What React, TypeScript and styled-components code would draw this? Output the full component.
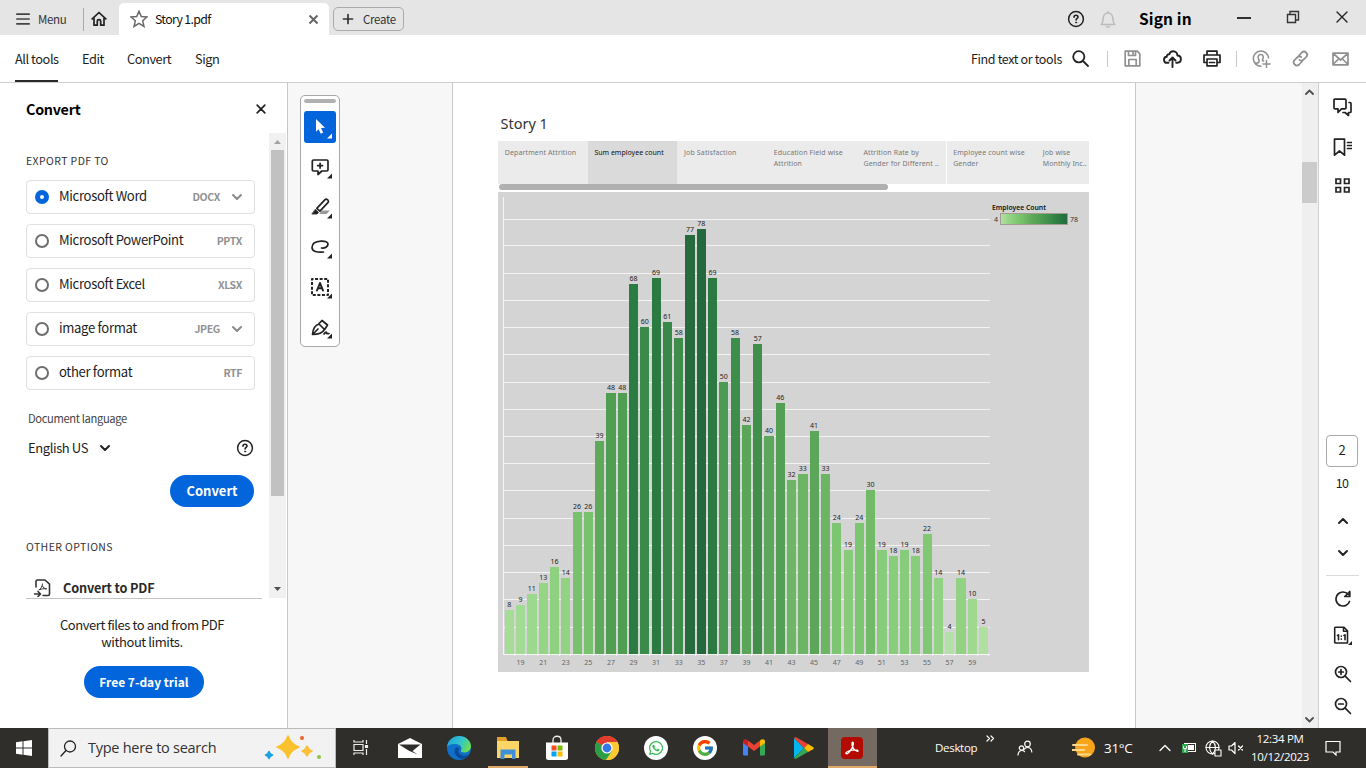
import React from "react";
import styled, { createGlobalStyle } from "styled-components";
import { FcGoogle } from "react-icons/fc";
import { FaWhatsapp } from "react-icons/fa";

const UI = `"Noto Sans CJK SC", "Noto Sans", sans-serif`;
const OS = `"Open Sans", "Noto Sans", sans-serif`;

const Global = createGlobalStyle`
  * { box-sizing: border-box; }
  html, body { margin: 0; padding: 0; overflow: hidden; }
  body { width: 1366px; height: 768px; background: #fff; font-family: ${UI}; color: #1d1d1d; }
  svg { display: block; flex: none; }
`;

const Window = styled.div`
  width: 1366px;
  height: 768px;
  display: flex;
  flex-direction: column;
  overflow: hidden;
`;

const Label = styled.span<{ $size?: number; $ls?: number; $w?: number; $bold?: boolean; $color?: string; $ml?: number }>`
  flex: none;
  white-space: nowrap;
  line-height: 18px;
  font-size: ${(p) => p.$size ?? 13}px;
  letter-spacing: ${(p) => p.$ls ?? 0}px;
  font-weight: ${(p) => (p.$bold ? 700 : 400)};
  color: ${(p) => p.$color ?? "#1d1d1d"};
  margin-left: ${(p) => p.$ml ?? 0}px;
  ${(p) => (p.$w ? `width: ${p.$w}px;` : "")}
`;

const IconBox = styled.span<{ $w?: number; $h?: number; $ml?: number; $mt?: number }>`
  flex: none;
  display: flex;
  align-items: center;
  justify-content: center;
  width: ${(p) => p.$w ?? 18}px;
  height: ${(p) => p.$h ?? 18}px;
  margin-left: ${(p) => p.$ml ?? 0}px;
  margin-top: ${(p) => p.$mt ?? 0}px;
`;

const Divider = styled.span<{ $h: number; $ml: number; $color?: string }>`
  flex: none;
  width: 1px;
  height: ${(p) => p.$h}px;
  margin-left: ${(p) => p.$ml}px;
  background: ${(p) => p.$color ?? "#c9c9c9"};
`;

type IconProps = { size?: number; w?: number; h?: number; color?: string; sw?: number; children?: React.ReactNode };
const Icon = ({ size = 18, w, h, color = "#222", sw = 1.7, children }: IconProps) => (
  <svg
    width={w ?? size}
    height={h ?? size}
    viewBox={`0 0 ${w ?? size} ${h ?? size}`}
    fill="none"
    stroke={color}
    strokeWidth={sw}
    strokeLinejoin="round"
    strokeLinecap="round"
  >
    {children}
  </svg>
);

const HelpIcon = () => (
  <Icon color="#222" sw={1.5}>
    <circle cx="9" cy="9" r="7.4" />
    <path d="M7 7.2C7 5.9 7.9 5.2 9 5.2s2 .7 2 1.8c0 1.3-1.9 1.5-1.9 3" strokeWidth="1.6" />
    <circle cx="9.1" cy="12.5" r=".6" fill="#222" strokeWidth=".8" />
  </Icon>
);
const ChevronIcon = ({ color = "#8a8a8a", up = false }: { color?: string; up?: boolean }) => (
  <Icon w={12} h={8} color={color} sw={2}>
    <path d={up ? "M2 6l4-4 4 4" : "M2 2l4 4 4-4"} />
  </Icon>
);

/* ---------- title bar ---------- */
const TitleBar = styled.header`
  height: 35px;
  flex: none;
  display: flex;
  background: #e5e5e5;
`;
const TitleLeft = styled.div`
  display: flex;
  align-items: center;
  width: 119px;
  height: 35px;
  padding: 3px 0 0 16px;
`;
const Tab = styled.div`
  width: 210px;
  height: 32px;
  margin-top: 3px;
  padding-left: 11px;
  display: flex;
  align-items: center;
  background: #fff;
  border-radius: 5px 5px 0 0;
`;
const CreateButton = styled.div`
  width: 71px;
  height: 24px;
  margin: 7px 0 0 4px;
  padding-left: 8px;
  display: flex;
  align-items: center;
  border: 1px solid #aaa;
  border-radius: 5px;
`;
const TitleRight = styled.div`
  margin-left: auto;
  width: 299px;
  display: flex;
  align-items: center;
`;

const TopBar = () => (
  <TitleBar>
    <TitleLeft>
      <Icon w={14} h={12} color="#444" sw={1.7}>
        <path d="M.8 1.2h12.4M.8 6h12.4M.8 10.8h12.4" />
      </Icon>
      <Label $size={11.5} $ls={-0.3} $ml={8} $w={45} $color="#333">Menu</Label>
      <Divider $h={23} $ml={0} $color="#aaa" />
      <IconBox $w={16} $ml={7}>
        <Icon w={16} h={16} sw={1.7}>
          <path d="M1.2 7.9L8 1.5l6.8 6.4M3 7v7.2h3.3v-4c0-1 .7-1.6 1.7-1.6s1.7.6 1.7 1.6v4H13V7" />
        </Icon>
      </IconBox>
    </TitleLeft>
    <Tab>
      <Icon w={18} h={18} color="#6a6a6a" sw={1.5}>
        <path d="M9 1.2l2.3 5.3 5.7.5-4.3 3.8 1.3 5.7L9 13.4l-5 3.1 1.3-5.7L1 7l5.7-.5z" strokeLinejoin="miter" />
      </Icon>
      <Label $size={12.3} $ls={-0.65} $ml={7} $w={153} $color="#111">Story 1.pdf</Label>
      <Icon w={11} h={11} color="#666" sw={2}>
        <path d="M1.5 1.5l8 8M9.5 1.5l-8 8" strokeLinecap="butt" />
      </Icon>
    </Tab>
    <CreateButton>
      <Icon w={12} h={12} color="#333" sw={1.7}>
        <path d="M6 1.5v9M1.5 6h9" />
      </Icon>
      <Label $size={11.5} $ls={-0.3} $ml={9} $color="#333">Create</Label>
    </CreateButton>
    <TitleRight>
      <IconBox $mt={3}><HelpIcon /></IconBox>
      <IconBox $ml={15} $mt={4} $w={16}>
        <Icon w={16} h={18} color="#bbb" sw={1.5}>
          <path d="M1.2 13.5c1.7-1.5 2-3 2-6C3.2 4.5 5 2 8 2s4.800 2.500 4.800 5.500c0 3 .3 4.500 2 6zM8 .8V2M6.500 15.500c.5.900 2.500.900 3 0" />
        </Icon>
      </IconBox>
      <Label $size={15.5} $bold $ls={0.15} $ml={23} $w={98} $color="#000">Sign in</Label>
      <Icon w={14} h={4} sw={1.7} color="#111"><path d="M0 2h14" strokeLinecap="butt" /></Icon>
      <IconBox $ml={35} $w={14} $mt={-1}>
        <Icon w={14} h={14} sw={1.4} color="#333">
          <path d="M1.500 4.500h8v8h-8zM4 4V1.500h8.500V10H10" strokeLinejoin="miter" />
        </Icon>
      </IconBox>
      <IconBox $ml={36} $w={12} $mt={-2}>
        <Icon w={12} h={12} sw={1.4} color="#222"><path d="M1 1l10 10M11 1L1 11" /></Icon>
      </IconBox>
    </TitleRight>
  </TitleBar>
);

/* ---------- menu bar ---------- */
const MenuBar = styled.nav`
  height: 48px;
  flex: none;
  display: flex;
  align-items: center;
  padding-left: 15px;
  border-bottom: 1px solid #cfcfcf;
`;
const MenuItem = styled.span<{ $w: number; $active?: boolean }>`
  width: ${(p) => p.$w}px;
  height: 47px;
  margin-right: 24px;
  font-size: 12.8px;
  letter-spacing: -0.45px;
  line-height: 47px;
  white-space: nowrap;
  border-bottom: 2px solid ${(p) => (p.$active ? "#2a2a2a" : "transparent")};
`;
const MenuTools = styled.div`
  margin-left: auto;
  width: 395px;
  display: flex;
  align-items: center;
`;

const CommandBar = () => (
  <MenuBar>
    <MenuItem $w={43} $active>All tools</MenuItem>
    <MenuItem $w={21}>Edit</MenuItem>
    <MenuItem $w={44}>Convert</MenuItem>
    <MenuItem $w={25}>Sign</MenuItem>
    <MenuTools>
      <Label $size={12.5} $ls={-0.37} $w={101}>Find text or tools</Label>
      <Icon w={17} h={17} sw={1.8}><circle cx="6.800" cy="6.800" r="5.600" /><path d="M11 11l5 5" /></Icon>
      <Divider $h={16} $ml={18} />
      <IconBox $ml={16} $w={17}>
        <Icon w={17} h={17} color="#909090" sw={1.7}>
          <path d="M1.200 1.200h12l2.600 2.600v12H1.200zM4.500 1.500v4h7v-4M4.800 15.500V9.500h7.400v6M9 2v2" />
        </Icon>
      </IconBox>
      <IconBox $ml={22} $w={19}>
        <Icon w={19} h={18} sw={1.9}>
          <path d="M5.500 12.800H4.300a3 3 0 01-.5-6c0-1.500 1-2.600 2.500-2.500C6.800 2.400 8.300 1.200 10.200 1.200c2.400 0 4.200 1.900 4.200 4.300 2 0 3.500 1.500 3.500 3.600s-1.500 3.700-3.500 3.700h-1.200M9.500 17V8M6.500 10.500l3-3 3 3" />
        </Icon>
      </IconBox>
      <IconBox $ml={21} $w={18}>
        <Icon w={18} h={17} sw={1.7}>
          <path d="M4 4.500V1.200h10v3.300M4 12.500H1V5h16v7.500h-3M4 9h10v6.800H4zM6.500 12.500h5" />
        </Icon>
      </IconBox>
      <Divider $h={16} $ml={15} />
      <IconBox $ml={15} $w={18}>
        <Icon w={19} h={18} color="#909090" sw={1.5}>
          <path d="M9 16.200A7.600 7.600 0 1116.500 8M3.800 13c2.800.3 3.800-1 3.200-3C5.500 7.500 6 4.500 8.800 4.500s3 3 1.700 5c-.3 1.200.3 1.500 1.200 1.500M14.500 10.500v7M11 14h7" />
        </Icon>
      </IconBox>
      <IconBox $ml={22} $w={17}>
        <Icon w={17} h={17} color="#909090" sw={1.8}>
          <path d="M7 5.500l2.800-3c1.300-1.200 3-1.200 4.300 0s1.400 3 .2 4.300L11.500 9.700c-1.200 1.200-3 1.100-4 .2M10 11.500l-2.800 3c-1.300 1.200-3.300 1.200-4.500 0s-1.400-3-.2-4.300L5.300 7.300c1.200-1.200 3-1.100 4-.2" />
        </Icon>
      </IconBox>
      <IconBox $ml={23} $w={17}>
        <Icon w={17} h={14} color="#909090" sw={1.7}>
          <path d="M1 1.200h15v11.600H1zM1.500 1.700L8.500 8l7-6.300M1.500 12l5-5M15.500 12l-5-5" />
        </Icon>
      </IconBox>
    </MenuTools>
  </MenuBar>
);

/* ---------- left panel ---------- */
const Workspace = styled.main`
  height: 645px;
  flex: none;
  display: flex;
`;
const Panel = styled.aside`
  width: 288px;
  flex: none;
  border-right: 1px solid #c8c8c8;
  display: flex;
  flex-direction: column;
`;
const PanelHeader = styled.div`
  height: 50px;
  flex: none;
  display: flex;
  align-items: center;
  justify-content: space-between;
  padding: 2px 21px 0 26px;
`;
const PanelBody = styled.div`
  height: 465px;
  flex: none;
  display: flex;
`;
const PanelContent = styled.div`
  width: 269px;
  height: 465px;
  padding: 19px 0 0 26px;
  overflow: hidden;
`;
const SectionTitle = styled.div`
  height: 18px;
  line-height: 18px;
  font-size: 10.5px;
  letter-spacing: 0.4px;
  white-space: nowrap;
  color: #333;
`;
const FormatCard = styled.div`
  width: 229px;
  height: 34px;
  margin-bottom: 10px;
  padding: 0 12px 0 8px;
  display: flex;
  align-items: center;
  border: 1px solid #e0e0e0;
  border-radius: 4px;
`;
const FormatList = styled.div`
  padding-top: 10px;
`;
const Radio = styled.span<{ $on?: boolean }>`
  width: 14px;
  height: 14px;
  flex: none;
  border-radius: 50%;
  background: #fff;
  border: ${(p) => (p.$on ? "5px solid #0265dc" : "2px solid #6e6e6e")};
`;
const FormatName = styled.span`
  flex: 1;
  margin-left: 10px;
  font-size: 13.1px;
  letter-spacing: -0.33px;
  line-height: 18px;
  padding-bottom: 2px;
  white-space: nowrap;
`;
const FormatExt = styled.span`
  font-size: 10.5px;
  font-weight: 700;
  letter-spacing: -0.35px;
  color: #929292;
  line-height: 34px;
`;
const LanguageRow = styled.div`
  display: flex;
  align-items: center;
  height: 20px;
  margin-top: 11px;
  padding-left: 2px;
`;
const Pill = styled.div<{ $w: number; $size?: number }>`
  width: ${(p) => p.$w}px;
  height: 32px;
  border-radius: 16px;
  background: #0265dc;
  color: #fff;
  font-weight: 700;
  font-size: ${(p) => p.$size ?? 13}px;
  line-height: 31px;
  text-align: center;
  white-space: nowrap;
`;
const ConvertRow = styled.div`
  width: 228px;
  margin-top: 17px;
  display: flex;
  justify-content: flex-end;
`;
const OtherTitle = styled(SectionTitle)`
  margin-top: 31px;
`;
const OptionRow = styled.div`
  display: flex;
  align-items: center;
  height: 22px;
  margin-top: 21px;
  padding-left: 8px;
`;
const PanelScroll = styled.div`
  width: 17px;
  height: 465px;
  background: #f1f1f1;
  display: flex;
  flex-direction: column;
  align-items: center;
  justify-content: space-between;
  padding: 7px 0;
`;
const PanelThumb = styled.div`
  width: 13px;
  height: 346px;
  margin: 6px 0 91px;
  background: #c1c1c1;
`;
const PanelFooter = styled.div`
  width: 236px;
  margin-left: 26px;
  padding-top: 17px;
  border-top: 1px solid #c4c4c4;
  display: flex;
  flex-direction: column;
  align-items: center;
  height: 130px;
  flex: none;
`;
const Pitch = styled.p`
  margin: 0 0 16px -4px;
  font-size: 13px;
  letter-spacing: -0.43px;
  line-height: 17px;
  text-align: center;
`;

const formats = [
  { name: "Microsoft Word", ext: "DOCX", on: true, menu: true },
  { name: "Microsoft PowerPoint", ext: "PPTX" },
  { name: "Microsoft Excel", ext: "XLSX" },
  { name: "image format", ext: "JPEG", menu: true },
  { name: "other format", ext: "RTF" },
];

const ConvertPanel = () => (
  <Panel>
    <PanelHeader>
      <Label $size={14.3} $bold $ls={-0.25} $color="#000">Convert</Label>
      <Icon w={10} h={10} sw={1.7}><path d="M1.200 1.200l7.600 7.600M8.800 1.200L1.200 8.800" /></Icon>
    </PanelHeader>
    <PanelBody>
      <PanelContent>
        <SectionTitle>EXPORT PDF TO</SectionTitle>
        <FormatList>
          {formats.map((f) => (
            <FormatCard key={f.name}>
              <Radio $on={f.on} />
              <FormatName>{f.name}</FormatName>
              <FormatExt>{f.ext}</FormatExt>
              {f.menu && <IconBox $w={11} $ml={11}><ChevronIcon /></IconBox>}
            </FormatCard>
          ))}
        </FormatList>
        <IconBox $w={100} $h={18} $ml={2} $mt={19}>
          <Label $size={11.2} $ls={-0.37} $w={100} $color="#444">Document language</Label>
        </IconBox>
        <LanguageRow>
          <Label $size={13} $ls={-0.4} $w={71}>English US</Label>
          <ChevronIcon color="#222" />
          <IconBox $ml={125}><HelpIcon /></IconBox>
        </LanguageRow>
        <ConvertRow><Pill $w={84}>Convert</Pill></ConvertRow>
        <OtherTitle>OTHER OPTIONS</OtherTitle>
        <OptionRow>
          <Icon w={17} h={18} sw={1.6} color="#333">
            <path d="M2 8V2.500C2 1.500 2.500 1 3.500 1H11l4.500 4.200V15c0 1-.5 1.500-1.500 1.500H9M0 15h6M4 12.500L6.500 15 4 17.500" />
            <path d="M5 11c2-1 3.500-4 3.500-6M8.500 7c.8 1.800 2 2.800 4 2.800M6 10.500c2-.7 3.500-1 6-.7" strokeWidth="1" />
          </Icon>
          <Label $size={12.7} $ls={-0.15} $bold $ml={12} $color="#2a2a2a">Convert to PDF</Label>
        </OptionRow>
      </PanelContent>
      <PanelScroll>
        <svg width="7" height="4"><path d="M0 4L3.500 0 7 4z" fill="#a3a3a3" /></svg>
        <PanelThumb />
        <svg width="7" height="4"><path d="M0 0h7L3.500 4z" fill="#505050" /></svg>
      </PanelScroll>
    </PanelBody>
    <PanelFooter>
      <Pitch>Convert files to and from PDF<br />without limits.</Pitch>
      <Pill $w={120} $size={12}>Free 7-day trial</Pill>
    </PanelFooter>
  </Panel>
);

/* ---------- document canvas ---------- */
const Canvas = styled.section`
  width: 1014px;
  flex: none;
  display: flex;
  align-items: flex-start;
  background: #f7f7f7;
`;
const Palette = styled.div`
  width: 40px;
  height: 252px;
  margin: 12px 0 0 12px;
  flex: none;
  display: flex;
  flex-direction: column;
  align-items: center;
  background: #fff;
  border: 1px solid #a8a8a8;
  border-radius: 5px;
`;
const Grip = styled.div`
  width: 32px;
  height: 4px;
  flex: none;
  margin: 3px 0 8px;
  border-radius: 2px;
  background: #b1b1b1;
`;
const ToolButton = styled.div<{ $active?: boolean }>`
  width: 32px;
  height: 32px;
  flex: none;
  margin-bottom: 8px;
  border-radius: 3px;
  background: ${(p) => (p.$active ? "#0265dc" : "transparent")};
`;

const tools: React.ReactNode[] = [
  <path d="M12 8l9 8.700-4 .4 2.200 4.400-2.400 1.200-2.200-4.500-2.600 2.600z" fill="#fff" stroke="none" />,
  <path d="M9.500 9h13.300c.8 0 1.200.5 1.200 1.200v8.600c0 .8-.5 1.200-1.200 1.200h-5L14 23.500V20h-4.500c-.8 0-1.200-.5-1.200-1.200v-8.600C8.300 9.500 8.700 9 9.500 9zM13.700 14.700h4.800M16.100 12.300v4.800" />,
  <>
    <path d="M15 23l3-3.500h8L22.500 23z" fill="#999" stroke="none" />
    <path d="M12.800 17.300l8-8.500c.8-.8 2-.7 2.900.1s1 2 .2 2.800l-8 8.500z" />
    <path d="M11.500 18.500l3 3-1.500 1.500H8.200z" fill="#222" stroke="#222" strokeWidth=".8" />
  </>,
  <path d="M17.500 17c3 .5 6-1 6.500-3.500.3-2.500-3-3.500-7-3.300C12 10.500 8 12.500 8 16.500c0 4 5 5 11.500 4.500" />,
  <>
    <rect x="8" y="8" width="16" height="16" strokeDasharray="3 1.570" strokeDashoffset="1.500" strokeWidth="2" strokeLinecap="butt" />
    <path d="M13 19.500L16 12l3 7.500M14 17.300h4" strokeWidth="2" />
  </>,
  <path d="M8.500 23.500c.3-4.500 1.500-9 6.500-10.500l5.500 5.500c-2 3.500-6 5-12 5zM9 23l5-5M15 12.500l3-3 5.500 4.500-2.500 4M20 23c1.500-2.500 3-2.500 2.500-.5 1 0 1.500.3 2.500 0" />,
];

const Page = styled.article`
  width: 684px;
  height: 645px;
  margin-left: 112px;
  flex: none;
  padding: 31px 46px 0 45px;
  background: #fff;
  border: solid #c9c9c9;
  border-width: 0 1px;
  font-family: "Noto Sans", sans-serif;
`;
const StoryTitle = styled.h1`
  height: 18px;
  margin: 0 0 9px 2.5px;
  font-size: 14.5px;
  line-height: 18px;
  font-weight: 400;
  color: #333;
`;
const StoryTabs = styled.div`
  display: flex;
  height: 43px;
  background: #ebebeb;
`;
const StoryTab = styled.div<{ $active?: boolean; $gap?: boolean }>`
  flex: 0 0 89.7px;
  max-width: 89.7px;
  height: 43px;
  overflow: hidden;
  padding: 7px 0 0 ${(p) => (p.$gap ? 5.7 : 6.7)}px;
  font-size: 7px;
  line-height: 10.5px;
  letter-spacing: ${(p) => (p.$active ? 0 : 0.13)}px;
  white-space: pre;
  color: ${(p) => (p.$active ? "#111" : "#777")};
  background: ${(p) => (p.$active ? "#dadada" : "transparent")};
  border-left: ${(p) => (p.$gap ? "1px solid #fff" : "0")};
  &:last-child { flex: 1 1 0; letter-spacing: 0.08px; }
`;
const StoryScroll = styled.div`
  width: 389px;
  height: 6px;
  margin: 0 0 2px 1px;
  border-radius: 3px;
  background: #b0b0b0;
`;

const counts = [
  8, 9, 11, 13, 16, 14, 26, 26, 39, 48, 48, 68, 60, 69, 61, 58, 77, 78, 69, 50, 58, 42, 57, 40, 46, 32, 33, 41, 33,
  24, 19, 24, 30, 19, 18, 19, 18, 22, 14, 4, 14, 10, 5,
];
const ramp: [number, number[]][] = [
  [4, [179, 224, 166]],
  [8, [165, 220, 150]],
  [14, [146, 211, 131]],
  [26, [120, 194, 109]],
  [40, [93, 167, 90]],
  [48, [79, 158, 82]],
  [58, [62, 142, 75]],
  [68, [43, 124, 66]],
  [78, [36, 105, 61]],
];
const rgb = (c: number[]) => `rgb(${c.map(Math.round).join(",")})`;
const shade = (v: number) => {
  const i = Math.max(1, ramp.findIndex(([s]) => s >= v));
  const [a, ca] = ramp[i - 1];
  const [b, cb] = ramp[i];
  const t = (v - a) / (b - a);
  return rgb(ca.map((c, k) => c + (cb[k] - c) * t));
};

const STEP = 11.29;
const UNIT = 5.4435;
const GRID = 27.235;
const BASE = 462;

const Chart = () => (
  <svg width="591" height="480" fontFamily="Noto Sans, sans-serif" fontSize="7">
    <defs>
      <linearGradient id="scale">
        {ramp.map(([s, c]) => <stop key={s} offset={(s - 4) / 74} stopColor={rgb(c)} />)}
      </linearGradient>
    </defs>
    <rect width="591" height="480" fill="#d4d4d4" />
    {Array.from({ length: 16 }, (_, i) => (
      <rect key={i} x="6" y={Math.max(27, Math.round(BASE - 0.1 - (i + 1) * GRID))} width="486" height="1" fill="#f3f3f3" />
    ))}
    <rect x="5" y="5" width="1" height="458" fill="#f5f5f5" />
    <rect x="5" y={BASE} width="487" height="1" fill="#f5f5f5" />
    {counts.map((v, i) => {
      const cx = 11.3 + i * STEP;
      const left = Math.floor(7.3 + i * STEP);
      const right = Math.floor(16.48 + i * STEP);
      const top = Math.round(BASE - 0.21 - v * UNIT);
      return (
        <g key={i}>
          <rect x={left} y={top} width={right - left} height={BASE - top} fill={shade(v)} />
          <rect x={right} y={BASE} width="1" height="2" fill="#f5f5f5" />
          <text x={cx} y={top - 3} textAnchor="middle" fill="#222">{v}</text>
          {i % 2 === 1 && <text x={cx} y="473" textAnchor="middle" fill="#666">{18 + i}</text>}
        </g>
      );
    })}
    <text x="494" y="18" fill="#111" fontWeight="600" fontSize="6.8">Employee Count</text>
    <text x="496" y="30" fill="#333">4</text>
    <text x="572" y="30" fill="#333">78</text>
    <rect x="502.500" y="21.500" width="67" height="11" fill="url(#scale)" stroke="#a39a92" />
  </svg>
);

const Document = () => (
  <Page>
    <StoryTitle>Story 1</StoryTitle>
    <StoryTabs>
      <StoryTab>Department Attrition</StoryTab>
      <StoryTab $active>Sum employee count</StoryTab>
      <StoryTab>Job Satisfaction</StoryTab>
      <StoryTab>{"Education Field wise\nAttrition"}</StoryTab>
      <StoryTab>{"Attrition Rate by\nGender for Different .."}</StoryTab>
      <StoryTab $gap>{"Employee count wise\nGender"}</StoryTab>
      <StoryTab>{"Job wise\nMonthly Inc.."}</StoryTab>
    </StoryTabs>
    <StoryScroll />
    <Chart />
  </Page>
);

const DocScroll = styled.div`
  width: 17px;
  height: 645px;
  flex: none;
  display: flex;
  flex-direction: column;
  align-items: center;
  justify-content: space-between;
  padding: 6px 1px 5px 0;
  background: #efefef;
  border-right: 1px solid #cfcfcf;
`;
const DocThumb = styled.div`
  width: 15px;
  height: 41px;
  margin-bottom: 447px;
  background: #cbcbcb;
`;

/* ---------- right rail ---------- */
const Rail = styled.aside`
  width: 47px;
  flex: none;
  display: flex;
  flex-direction: column;
  align-items: center;
  padding-top: 15px;
`;
const PageBox = styled.div`
  width: 32px;
  height: 32px;
  margin: 240px 1px 0 0;
  flex: none;
  border: 1px solid #a8a8a8;
  border-radius: 4px;
  font-size: 13px;
  line-height: 28px;
  text-align: center;
`;
const PageTotal = styled.div`
  height: 18px;
  margin: 7px 1px 20px 0;
  font-size: 12.5px;
  line-height: 18px;
  letter-spacing: -0.8px;
`;
const RailRule = styled.div`
  width: 33px;
  height: 1px;
  margin: 13px 0 14px;
  background: #dcdcdc;
`;
const CornerMark = <path d="M19 15v4h-4z" fill="#222" stroke="none" />;

const RightRail = () => (
  <Rail>
    <Icon w={19} h={19}>
      <path d="M2 1.200h10c.6 0 1 .4 1 1v7.600c0 .6-.4 1-1 1H8.500L5 14.500v-3.700H2c-.6 0-1-.4-1-1V2.200c0-.6.400-1 1-1z" />
      <path d="M16 4.500h1c.6 0 1 .4 1 1v8c0 .6-.4 1-1 1h-1.500v3l-3.500-3h-2" />
    </Icon>
    <IconBox $mt={21} $w={19} $h={19}>
      <Icon w={19} h={19}>
        <path d="M1.500 1.200h10v16L6.500 13l-5 4.200zM14.500 4.500h4M14.500 7.500h4M14.500 10.500h4" />
      </Icon>
    </IconBox>
    <IconBox $mt={19} $w={15} $h={19}>
      <Icon w={15} h={15} sw={1.7}>
        <path d="M1 1h4.500v4.500H1zM9.500 1H14v4.500H9.500zM1 9.500h4.500V14H1zM9.500 9.500H14V14H9.500z" strokeLinejoin="miter" />
      </Icon>
    </IconBox>
    <PageBox>2</PageBox>
    <PageTotal>10</PageTotal>
    <IconBox $h={18}><ChevronIcon color="#222" up /></IconBox>
    <IconBox $h={18} $mt={14}><ChevronIcon color="#222" /></IconBox>
    <RailRule />
    <Icon w={18} h={18}>
      <path d="M15.500 11.500A7 7 0 119 2c2.300 0 4 .9 5.500 2.500M15.800 1.500v5h-5z" />
    </Icon>
    <IconBox $mt={18} $w={19} $h={20}>
      <Icon w={19} h={20} sw={1.6}>
        <path d="M2.500 1.200H11l3.500 3.500V17h-12c-.5 0-.8-.3-.8-.8V2c0-.5.300-.8.800-.8zM10.500 1.500v3.700h3.700M4.500 9.500l1-.7v5M11 9.500l1-.7v5" />
        <path d="M8.300 10v.2M8.300 13v.2" />
        {CornerMark}
      </Icon>
    </IconBox>
    <IconBox $mt={19}>
      <Icon><circle cx="7" cy="7" r="5.500" /><path d="M11.200 11.200L16.500 16.500M4.700 7h4.600M7 4.700v4.600" /></Icon>
    </IconBox>
    <IconBox $mt={14}>
      <Icon><circle cx="7" cy="7" r="5.500" /><path d="M11.200 11.200L16.500 16.500M4.700 7h4.600" /></Icon>
    </IconBox>
  </Rail>
);

/* ---------- taskbar ---------- */
const Taskbar = styled.footer`
  height: 40px;
  flex: none;
  display: flex;
  align-items: center;
  background: #302e2b;
  font-family: ${OS};
`;
const StartButton = styled.div`
  width: 48px;
  display: flex;
  justify-content: center;
`;
const SearchBox = styled.div`
  width: 288px;
  height: 40px;
  padding-left: 11px;
  display: flex;
  align-items: center;
  background: #f2f2f2;
  border: 1px solid #bbb;
`;
const AppSlot = styled.div<{ $active?: boolean; $running?: boolean }>`
  width: 49.2px;
  height: 40px;
  padding-bottom: 1px;
  display: flex;
  align-items: center;
  justify-content: center;
  background-color: ${(p) => (p.$active ? "#746a62" : "transparent")};
  background-image: ${(p) => (p.$active || p.$running ? "linear-gradient(#e0a868, #e0a868)" : "none")};
  background-size: ${(p) => (p.$active ? "100%" : "40px")} 2px;
  background-repeat: no-repeat;
  background-position: center bottom;
`;
const Tray = styled.div`
  margin-left: auto;
  width: 431px;
  display: flex;
  align-items: center;
`;
const Clock = styled.div`
  width: 66px;
  margin: -1px 0 0 3px;
  font-size: 11.5px;
  line-height: 18px;
  letter-spacing: -0.3px;
  text-align: center;
  color: #fff;
`;

const Sparkle = ({ x, y, r, c }: { x: number; y: number; r: number; c: string }) => (
  <path
    d={`M${x} ${y - r}Q${x + r * 0.25} ${y - r * 0.25} ${x + r} ${y}Q${x + r * 0.25} ${y + r * 0.25} ${x} ${y + r}Q${x - r * 0.25} ${y + r * 0.25} ${x - r} ${y}Q${x - r * 0.25} ${y - r * 0.25} ${x} ${y - r}z`}
    fill={c}
    stroke={c}
    strokeWidth="1.500"
    strokeLinejoin="round"
  />
);

const apps: { icon: React.ReactNode; running?: boolean; active?: boolean }[] = [
  { icon: <svg width="18" height="17" fill="none" stroke="#eee" strokeWidth="1.200"><path d="M2 1v2h9V1M2 16v-2h9v2M2 5.500h9v6H2zM14.500 1v4M14.500 10v6" /><path d="M13.500 6.500h2v2h-2z" fill="#eee" /></svg> },
  { icon: <svg width="24" height="20"><path d="M0 6L12 0l12 6v14H0z" fill="#fff" /><path d="M1 6.500h21.500l-8 6.500 5 3.500-9-4z" fill="#302e2b" /></svg> },
  {
    icon: (
      <svg width="24" height="24" viewBox="0 0 24 24">
        <defs>
          <linearGradient id="edgeTop" x1="0" y1="0.200" x2="1" y2="0.600"><stop offset="0" stopColor="#1fa3dc" /><stop offset="0.550" stopColor="#33c4cc" /><stop offset="1" stopColor="#6ee04a" /></linearGradient>
        </defs>
        <circle cx="12" cy="12" r="12" fill="#0f6fc9" />
        <path d="M0 11C1 4 6 0 12 0c7 0 12 5 12 10 0 4-3 6.500-6.500 6.500-3 0-4-1-3.500-2 1-1 1-5-3-6C7 7.500 2 8 0 11z" fill="url(#edgeTop)" />
        <path d="M8.500 12c-2.500 4 .5 10.500 7 10.800 3-.3 5.500-2.300 6.500-4.300-3 2-7.500 1.500-9.500-.8-1.700-2-1.500-3.500-.2-5.200-1-1.500-2.800-1.700-3.800-.5z" fill="#0b4a97" />
      </svg>
    ),
  },
  {
    icon: (
      <svg width="22" height="24" viewBox="0 -2 22 24"><path d="M0 1h9l2 2.500h11V20H0z" fill="#f7c652" /><path d="M0-1h9l1.500 4H0z" fill="#e0a02a" /><path d="M0 3h22v17H0z" fill="#fbd667" /><path d="M3.500 11.500h15V21H15v-4.500H7.500V21h-4z" fill="#3f90d8" /></svg>
    ),
    running: true,
  },
  {
    icon: (
      <svg width="22" height="26" viewBox="0 -1 22 26"><path d="M7 8V4c0-5 8-5 8 0v4" fill="none" stroke="#eee" strokeWidth="1.300" /><path d="M0 6.500h22V22c0 1.300-1 2-2.500 2h-17C1 24 0 23.300 0 22z" fill="#fff" /><path d="M5.500 9.500h5v5h-5z" fill="#f25022" /><path d="M11.500 9.500h5v5h-5z" fill="#7fba00" /><path d="M5.500 15.500h5v5h-5z" fill="#00a4ef" /><path d="M11.500 15.500h5v5h-5z" fill="#ffb900" /></svg>
    ),
  },
  {
    icon: (
      <svg width="24" height="24" viewBox="0 0 24 24"><circle cx="12" cy="12" r="12" fill="#fcc934" /><path d="M12 12L1.600 6A12 12 0 0122.400 6H12z" fill="#e33b2e" /><path d="M1.600 6A12 12 0 0011 24l6-9-5-3z" fill="#2a9f47" /><path d="M12 12L1.600 6A12 12 0 0112 0v6z" fill="#e33b2e" /><path d="M22.400 6A12 12 0 0111 24l6.200-9L16 6z" fill="#fcc934" /><circle cx="12" cy="12" r="5.600" fill="#fff" /><circle cx="12" cy="12" r="4.400" fill="#3478e5" /></svg>
    ),
  },
  { icon: <svg width="24" height="24"><circle cx="12" cy="12" r="12" fill="#fff" /><FaWhatsapp x="4" y="4" size={16} color="#2bb84c" /></svg> },
  { icon: <svg width="24" height="24"><circle cx="12" cy="12" r="12" fill="#fff" /><FcGoogle x="2.500" y="2.500" size={19} /></svg> },
  {
    icon: (
      <svg width="22" height="17"><path d="M0 2.500V15c0 1 .7 1.500 1.500 1.500H5V6.500z" fill="#4285f4" /><path d="M17 6.500v10h3.500c.8 0 1.500-.5 1.500-1.500V2.500z" fill="#34a853" /><path d="M5 1.500v6L11 12l6-4.500v-6L11 6z" fill="#ea4335" /><path d="M0 2.500V4l5 3.500v-6C3-.3 0 0 0 2.500z" fill="#c5221f" /><path d="M22 2.500V4l-5 3.500v-6c2-1.800 5-1.500 5 1z" fill="#fbbc04" /></svg>
    ),
  },
  {
    icon: (
      <svg width="21" height="22"><path d="M1 1v20l10-10z" fill="#00b9f2" /><path d="M1 1c.5-1 1.500-1 2.500-.5L15 7l-4 4z" fill="#ea4335" /><path d="M1 21c.5 1 1.500 1 2.500.5L15 15l-4-4z" fill="#34a853" /><path d="M15 7l5 3c1 .7 1 1.500 0 2.200L15 15l-4-4z" fill="#fbbc04" /></svg>
    ),
  },
  {
    icon: (
      <svg width="22" height="22"><rect width="22" height="22" rx="4" fill="#b30b00" /><path d="M5 16.500c-1.200-1.500 6-4.500 11.500-3.300 2.500 2-3.500 1.500-5.200-4.200-.8-3 .2-5 1-3.200.6 2.700-4.800 12.700-7.300 10.700z" fill="none" stroke="#fff" strokeWidth="1.300" /></svg>
    ),
    active: true,
  },
];

const WindowsTaskbar = () => (
  <Taskbar>
    <StartButton>
      <svg width="16" height="16"><path d="M0 2.300L6.500 1.300V7.500H0zM7.500 1.200L16 0v7.500H7.500zM0 8.500h6.500v6.200L0 13.700zM7.500 8.500H16V16l-8.500-1.200z" fill="#fff" /></svg>
    </StartButton>
    <SearchBox>
      <Icon w={17} h={17} sw={1.3}><circle cx="10" cy="6.500" r="5.500" /><path d="M6 10.500L1 16" /></Icon>
      <Label $size={14.5} $ls={-0.27} $ml={11} $w={174} $color="#333">Type here to search</Label>
      <svg width="64" height="30">
        <Sparkle x={26} y={14} r={11} c="#fcc22d" />
        <Sparkle x={45} y={18} r={5} c="#fbbf3a" />
        <Sparkle x={7} y={22} r={3.5} c="#1ba0e2" />
        <circle cx="40" cy="5" r="2" fill="#f0642d" />
        <circle cx="57" cy="24" r="2" fill="#8cc63f" />
      </svg>
    </SearchBox>
    {apps.map((a, i) => (
      <AppSlot key={i} $running={a.running} $active={a.active}>{a.icon}</AppSlot>
    ))}
    <Tray>
      <Label $size={11.5} $ls={-0.3} $w={50} $color="#fff">Desktop</Label>
      <IconBox $w={10} $mt={-20}><Icon w={9} h={7} sw={1.2} color="#fff"><path d="M1 1l2.500 2.500L1 6M5 1l2.500 2.500L5 6" /></Icon></IconBox>
      <IconBox $ml={22} $w={16}>
        <Icon w={16} h={16} sw={1.2} color="#fff"><circle cx="10.500" cy="4" r="2.800" /><circle cx="4.500" cy="8" r="2.200" /><path d="M1 15c.3-3 2-4.500 4-4.500 1 0 2 .5 2.500 1.200M7 9.500c1-1.500 2-2 3.500-2 2.500 0 4 1.500 4.300 4.500" /></Icon>
      </IconBox>
      <IconBox $ml={39} $w={24} $h={24}>
        <svg width="24" height="22"><circle cx="13" cy="10.500" r="10" fill="#f9a51b" /><path d="M1 8h14M0 13h12M6 17.500h12" stroke="#ffd98a" strokeWidth="2" strokeLinecap="round" /></svg>
      </IconBox>
      <Label $size={13.5} $ls={-0.3} $ml={8} $w={55} $color="#fff">31°C</Label>
      <Icon w={12} h={8} sw={1.3} color="#fff"><path d="M1 6.500l5-5 5 5" /></Icon>
      <IconBox $ml={10} $w={16}>
        <svg width="16" height="14"><rect x="3.500" y="2.500" width="11" height="8" fill="none" stroke="#fff" /><rect x="5" y="4" width="8" height="5" fill="#fff" /><rect x="1" y="3" width="6" height="9" fill="#2fa84f" /><path d="M2.500 5v2.500h3V5M4 7.500V11" fill="none" stroke="#fff" /></svg>
      </IconBox>
      <IconBox $ml={8} $w={17}>
        <Icon w={17} h={17} sw={1.1} color="#fff"><circle cx="7.500" cy="7.500" r="6.500" /><path d="M1 7.500h13M7.500 1c-4 4-4 9 0 13M7.500 1c4 4 4 9 0 13" /><path d="M10 10h6v6h-6z" fill="#302e2b" /></Icon>
      </IconBox>
      <IconBox $ml={6} $w={16}>
        <Icon w={16} h={14} sw={1.2} color="#fff"><path d="M1 5v4h2.500L7 12.500v-11L3.500 5zM10.500 5l4 4M14.500 5l-4 4" /></Icon>
      </IconBox>
      <Clock>12:34 PM<br />10/12/2023</Clock>
      <IconBox $ml={12} $w={16}>
        <Icon w={16} h={16} sw={1.2} color="#fff"><path d="M1 1.500h14v10.500h-4v3l-3-3H1z" strokeLinejoin="miter" /></Icon>
      </IconBox>
    </Tray>
  </Taskbar>
);

export default function App() {
  return (
    <Window>
      <Global />
      <TopBar />
      <CommandBar />
      <Workspace>
        <ConvertPanel />
        <Canvas>
          <Palette>
            <Grip />
            {tools.map((t, i) => (
              <ToolButton key={i} $active={i === 0}>
                <Icon size={32} sw={1.7}>
                  {t}
                  <path d="M28 22.500v5h-5z" fill={i === 0 ? "#fff" : "#222"} stroke="none" />
                </Icon>
              </ToolButton>
            ))}
          </Palette>
          <Document />
        </Canvas>
        <DocScroll>
          <Icon w={9} h={6} color="#505050" sw={1.8}><path d="M1 5l3.500-3.500L8 5" /></Icon>
          <DocThumb />
          <Icon w={9} h={6} color="#505050" sw={1.8}><path d="M1 1l3.500 3.500L8 1" /></Icon>
        </DocScroll>
        <RightRail />
      </Workspace>
      <WindowsTaskbar />
    </Window>
  );
}
